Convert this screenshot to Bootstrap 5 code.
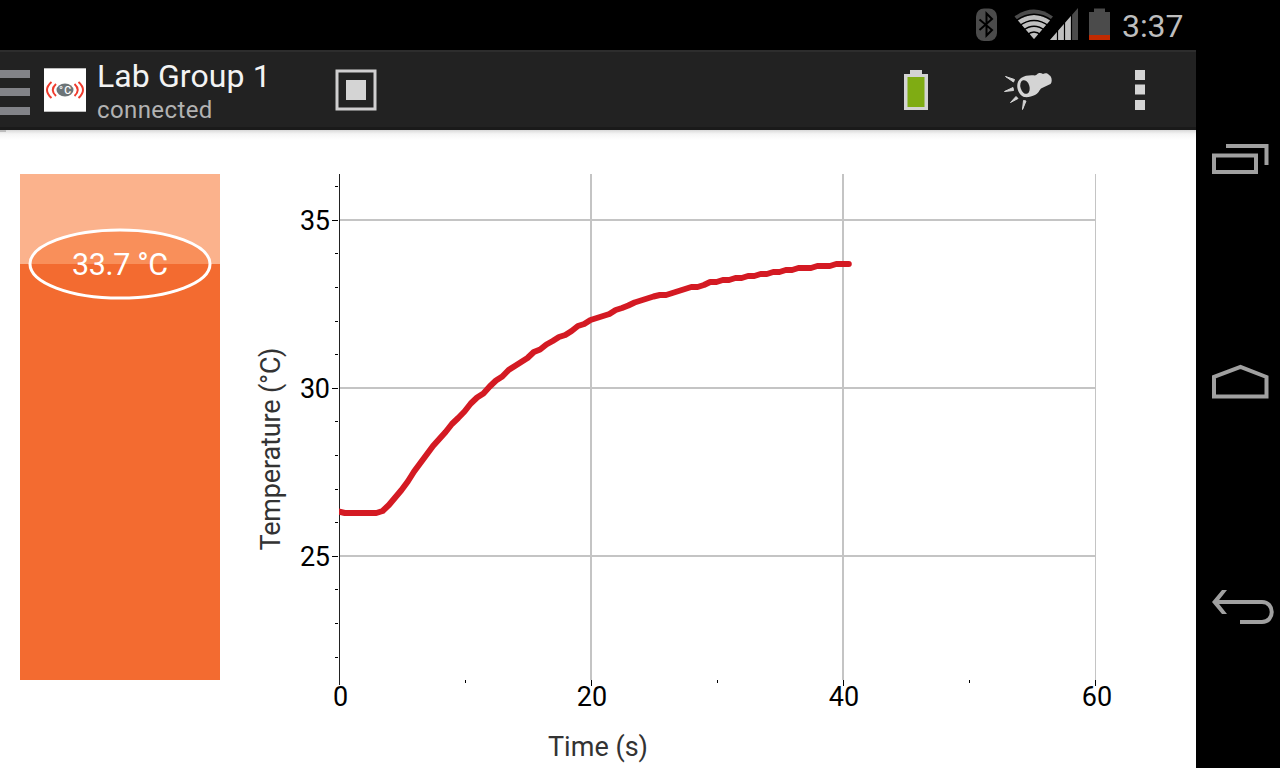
<!DOCTYPE html>
<html lang="en">
<head>
  <meta charset="UTF-8">
  <title>Lab Group 1</title>
  <meta name="viewport" content="width=device-width, initial-scale=1">
  <link href="https://cdn.jsdelivr.net/npm/bootstrap@5.3.0/dist/css/bootstrap.min.css" rel="stylesheet">
  <style>
    body { font-family: Roboto, sans-serif; background: #fff; overflow: hidden; }
    svg { display: block; flex-shrink: 0; }
    .screen { width: 1280px; height: 768px; }
    .status-bar { height: 50px; background: #000; padding-right: 12px; }
    .clock { font-size: 32px; line-height: 50px; color: #bebebe; letter-spacing: -.1px; width: 62px; padding-top: 1px; }
    .action-bar { height: 80px; background: #222; border-top: 2px solid #2d2d2d; border-bottom: 3px solid #1a1a1a; }
    .drawer-lines { width: 30px; height: 45px; margin: 5px 14px 0 0; }
    .drawer-lines span { height: 8px; background: #828388; }
    .titles { width: 238px; margin-left: 11px; padding-top: 8px; white-space: nowrap; }
    .app-title { font-size: 32px; line-height: 34px; color: #f3f3f3; letter-spacing: .1px; }
    .app-state { font-size: 24px; line-height: 35px; color: #b2b2b2; letter-spacing: .4px; }
    .content-area { height: 638px; background: linear-gradient(#d8d8d8, #f5f5f5 4px, #fff 10px); }
    .drawer-edge { width: 6px; height: 2px; margin-right: -6px; background: #bcbcbc; }
    .gauge { width: 200px; height: 506px; margin: 44px 0 0 20px; background: #fbb28c; }
    .gauge-fill { height: 416px; background: #f36b30; }
    .gauge-label { top: 54px; left: 8px; }
    .gauge-label text { font-size: 30.5px; fill: #fff; }
    .chart { margin-left: 20px; }
    .tick-text { font-size: 27px; fill: #000; }
    .axis-text { font-size: 27px; fill: #333; }
    .soft-keys { width: 84px; background: #000; padding-top: 143px; }
  </style>
</head>
<body>
  <div class="screen d-flex">
    <div class="d-flex flex-column flex-grow-1">

      <!-- Status bar -->
      <div class="status-bar d-flex align-items-center justify-content-end">
        <svg width="148" height="50" viewBox="974 0 148 50">
          <rect x="976" y="8.500" width="21" height="32.500" rx="8" fill="#4b4b4b"/>
          <path d="M979.5 19.5L992 30L986.500 35.500V13.500L992 19L979.5 30" fill="none" stroke="#000" stroke-width="2"/>
          <path d="M1014.500 16.500Q1034 2.500 1053 16.500L1034 39Z" fill="#4b4b4b"/>
          <path d="M1018 20.500Q1034 9.500 1050 20.500L1034 39Z" fill="#c0c0c0"/>
          <path d="M1016 20.500Q1034 8 1052 20.500M1019 26Q1034 15 1049 26M1023 30.500Q1034 22 1045 30.500M1027 35Q1034 29 1041 35" fill="none" stroke="#000" stroke-width="1.4"/>
          <path d="M1050 40L1078 8V40Z" fill="#4b4b4b"/>
          <path d="M1050 40L1071 16V40Z" fill="#c0c0c0"/>
          <path d="M1057.500 28V40M1064.500 20V40M1071.500 13V40" stroke="#000" stroke-width="1.200"/>
          <path d="M1089 12H1094V8.500H1105V12H1110V35H1089Z" fill="#4b4b4b"/>
          <path d="M1089 35H1110V40H1089Z" fill="#c12a00"/>
        </svg>
        <div class="clock">3:37</div>
      </div>

      <!-- Action bar -->
      <div class="action-bar d-flex align-items-center">
        <div class="drawer-lines d-flex flex-column justify-content-between">
          <span></span><span></span><span></span>
        </div>
        <svg width="42" height="44" viewBox="0 0 42 44">
          <rect width="42" height="44" fill="#fff"/>
          <path d="M0 .5H42M0 43.500H42" stroke="#bbb"/>
          <path d="M7.500 14Q-1.500 22 7.500 30M12 16Q5.500 22 12 28M34.500 14Q43.500 22 34.500 30M30.500 16Q37 22 30.500 28" fill="none" stroke="#ef3b2d" stroke-width="2"/>
          <ellipse cx="21" cy="22" rx="8.500" ry="6.500" fill="#6d7578"/>
          <text x="15" y="26" font-size="10.500" font-weight="500" fill="#fff" textLength="12">°C</text>
        </svg>
        <div class="titles">
          <div class="app-title">Lab Group 1</div>
          <div class="app-state">connected</div>
        </div>
        <svg width="42" height="42" viewBox="0 0 42 42">
          <rect x="2" y="2" width="38" height="38" fill="none" stroke="#d0cfd0" stroke-width="3"/>
          <rect x="11" y="11" width="20" height="20" fill="#d4d4d4"/>
        </svg>
        <svg class="ms-auto" width="296" height="75" viewBox="900 52 296 75">
          <path d="M904 74H910V70H922V74H928V110H904Z" fill="#d3d3d3"/>
          <rect x="907.500" y="77" width="17" height="30" fill="#7fac13"/>
          <path d="M1021 78C1025 75.500 1030 75 1035 75.500L1037 74.500C1038 72.500 1041 72.500 1043 74C1045 72.500 1048 73 1049 75C1052 76 1052.500 82 1050.500 84L1041 88.500C1039 91 1038 93.500 1035 95C1032 96.500 1028 97.500 1024 97C1017 94 1014.500 83 1021 78Z" fill="#d4d4d4"/>
          <ellipse cx="1025" cy="87" rx="4.500" ry="7" transform="rotate(-17 1025 87)" fill="#222"/>
          <path d="M1005.500 76.500L1014.500 79.500L1013.500 82ZM1004.500 91.500L1013 87.500L1013.500 90.500ZM1010.500 102.500L1016 96.500L1018 98.500ZM1022.500 109.500L1023.500 100.500L1026 101Z" fill="#d4d4d4" stroke="#d4d4d4" stroke-linejoin="round"/>
          <path d="M1135 70h10v10h-10zM1135 84.500h10v10h-10zM1135 100h10v10h-10z" fill="#d4d4d4"/>
        </svg>
      </div>

      <div class="content-area d-flex">
        <div class="drawer-edge"></div>

        <!-- Current temperature -->
        <div class="gauge position-relative d-flex flex-column justify-content-end">
          <div class="gauge-fill"></div>
          <svg class="gauge-label position-absolute" width="184" height="72" viewBox="-1 -1 184 72">
            <path d="M1 35A90 34 0 0 1 181 35Z" fill="#f98f5a"/>
            <ellipse cx="91" cy="35" rx="90" ry="34" fill="none" stroke="#fff" stroke-width="3"/>
            <text x="43" y="46" textLength="96">33.7 °C</text>
          </svg>
        </div>

        <!-- Temperature graph -->
        <svg class="chart" width="956" height="638" viewBox="240 130 956 638">
          <path d="M340 220H1096M340 388H1096M340 556H1096M591 174V680M843 174V680" stroke="#c4c4c4" stroke-width="2"/>
          <path d="M1095.500 174V680" stroke="#c4c4c4"/>
          <path d="M339.500 174V685" stroke="#222"/>
          <path id="ticks" stroke="#000"/>
          <clipPath id="plot"><rect x="339" y="174" width="757" height="506"/></clipPath>
          <polyline id="curve" clip-path="url(#plot)" fill="none" stroke="#d41a23" stroke-width="6" stroke-linecap="round" stroke-linejoin="round"/>
          <g class="tick-text">
            <text x="300" y="230" textLength="30">35</text>
            <text x="300" y="398" textLength="30">30</text>
            <text x="300" y="566" textLength="30">25</text>
            <g text-anchor="middle">
              <text x="340.500" y="706">0</text>
              <text x="592" y="706">20</text>
              <text x="844" y="706">40</text>
              <text x="1097" y="706">60</text>
            </g>
          </g>
          <g class="axis-text">
            <text x="548" y="756" textLength="100">Time (s)</text>
            <text transform="translate(279.500 550.500) rotate(-90)" textLength="203">Temperature (°C)</text>
          </g>
        </svg>
      </div>
    </div>

    <!-- Navigation keys -->
    <div class="soft-keys">
      <svg width="84" height="500" viewBox="1196 143 84 500" fill="none" stroke="#a0a0a0" stroke-width="4">
        <path d="M1214 155.500H1256V172H1214ZM1226 146H1266.500V165"/>
        <path d="M1214 396.500V377L1240.500 367L1266.500 377V396.500Z"/>
        <path d="M1216 602H1262C1275 602 1275 622 1262 622H1240"/>
        <path d="M1222 590H1227L1217.500 602L1227 614H1222L1212 602Z" fill="#a0a0a0" stroke="none"/>
      </svg>
    </div>
  </div>

  <script src="https://cdn.jsdelivr.net/npm/bootstrap@5.3.0/dist/js/bootstrap.bundle.min.js"></script>
  <script>
    // One reading every half second, as heights on the plot
    const readings = [
      511.5, 513, 513, 513, 513, 513, 513, 511, 505, 497.5, 490, 481.5, 471.5, 463, 454.5, 446, 439, 432, 424, 418,
      411.5, 403.5, 397.5, 393.5, 386.5, 380.5, 376.5, 370, 366, 362, 358, 352, 349.5, 344.5, 341, 337, 335, 331, 326, 324,
      320, 318, 316, 314, 310, 308, 305.5, 302.5, 300.5, 298.5, 296.5, 295, 295, 293, 291, 289, 287, 287, 285, 282,
      282, 280, 280, 278, 278, 276, 276, 274, 274, 272, 272, 270, 270, 268, 268, 268, 266, 266, 266, 264,
      264, 264
    ];
    const points = readings.map((y, i) => `${338.5 + i * 6.3},${y}`);
    document.getElementById("curve").setAttribute("points", points.join(" "));

    let ticks = "";
    for (let t = 22; t <= 36; t++) {
      const y = Math.floor(220.3 + (35 - t) * 33.6) + 0.5;
      ticks += t % 5 === 0 ? `M332 ${y}H338` : `M335 ${y}H338`;
    }
    for (let s = 10; s <= 60; s += 10) {
      ticks += `M${Math.floor(339.5 + s * 12.6) + 0.5} 680V${s % 20 === 0 ? 686 : 683}`;
    }
    document.getElementById("ticks").setAttribute("d", ticks);
  </script>
</body>
</html>
